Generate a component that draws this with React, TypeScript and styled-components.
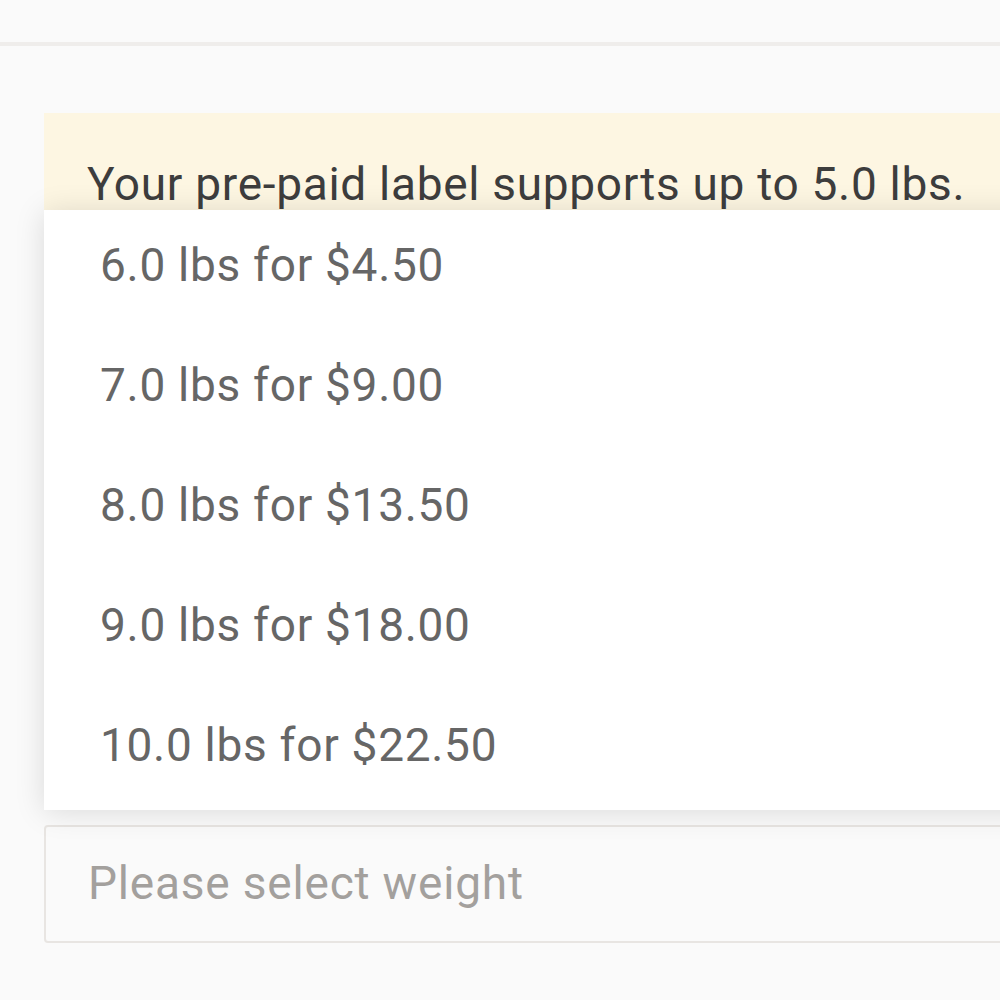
import styled, { createGlobalStyle } from 'styled-components';

const GlobalStyle = createGlobalStyle`
	body {
		margin: 0;
		background: #fafafa;
		font-family: Roboto, "Noto Sans", "Liberation Sans", sans-serif;
	}
`;

const Page = styled.div`
	width: 1000px;
	height: 1000px;
	overflow: hidden;
	background: #fafafa;
`;

const TopBar = styled.div`
	height: 42px;
	border-bottom: 4px solid #efedeb;
`;

const Content = styled.div`
	padding: 67px 0 0 44px;
	margin-right: -80px;
`;

const Notice = styled.p`
	margin: 0;
	padding: 44px 43px 44px;
	background: #fdf6e2;
	color: #3d3d3d;
	font-size: 46px;
	line-height: 54px;
	letter-spacing: 0.7px;
`;

const Field = styled.div`
	position: relative;
	margin-top: 570px;
`;

const Menu = styled.ul`
	position: absolute;
	left: 0;
	right: 0;
	bottom: calc(100% + 15px);
	margin: 0;
	padding: 0;
	list-style: none;
	background: #ffffff;
	box-shadow: 0 2px 28px rgba(0, 0, 0, 0.13);
`;

const Option = styled.li`
	height: 120px;
	padding: 0 56px 10px;
	box-sizing: border-box;
	display: flex;
	align-items: center;
	color: #666666;
	font-size: 46px;
	line-height: 54px;
	letter-spacing: 0.7px;
`;

const Select = styled.div`
	height: 118px;
	box-sizing: border-box;
	border: 2px solid #e8e5e2;
	border-radius: 4px;
	background: #fafafa;
	display: flex;
	align-items: center;
	padding: 0 42px 2px;
	color: #a3a09d;
	font-size: 46px;
	letter-spacing: 0.8px;
`;

const options = [
	'6.0 lbs for $4.50',
	'7.0 lbs for $9.00',
	'8.0 lbs for $13.50',
	'9.0 lbs for $18.00',
	'10.0 lbs for $22.50',
];

const App = () => {
	return (
		<Page>
			<GlobalStyle />
			<TopBar />
			<Content>
				<Notice>Your pre-paid label supports up to 5.0 lbs.</Notice>
				<Field>
					<Menu>
						{options.map((option) => (
							<Option key={option}>{option}</Option>
						))}
					</Menu>
					<Select>Please select weight</Select>
				</Field>
			</Content>
		</Page>
	)
};

export default App;
